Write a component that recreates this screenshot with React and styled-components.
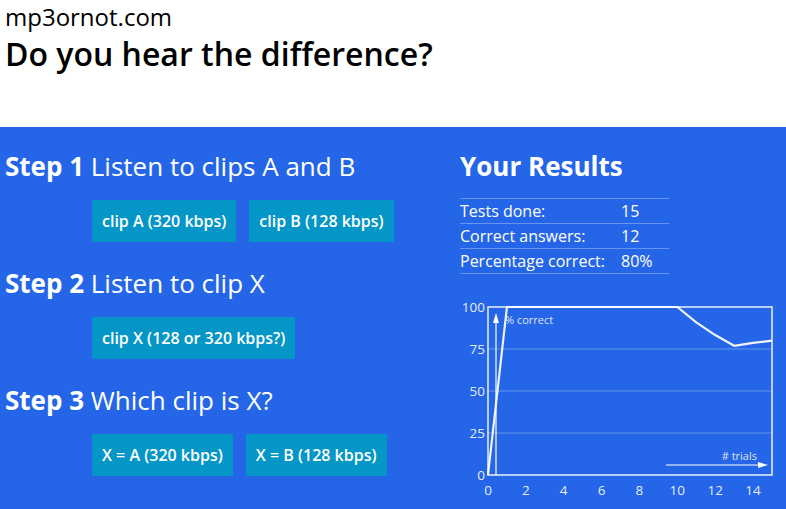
import React from "react";
import styled, { createGlobalStyle } from "styled-components";

const GlobalStyle = createGlobalStyle`
  html, body {
    margin: 0;
    padding: 0;
    background: #ffffff;
    font-family: "Open Sans", "Liberation Sans", sans-serif;
  }
`;

const Page = styled.div`
  width: 786px;
  height: 509px;
  overflow: hidden;
`;

const Header = styled.header`
  height: 127px;
  padding: 0 5px;
  box-sizing: border-box;
  color: #000;
  display: flex;
  flex-direction: column;
`;

const SiteName = styled.div`
  font-size: 24px;
  line-height: 33px;
`;

const Title = styled.h1`
  margin: 0;
  font-size: 32px;
  font-weight: 600;
  line-height: 44px;
  margin-top: -1px;
`;

const Main = styled.main`
  background: #2566e8;
  height: 382px;
  display: grid;
  grid-template-columns: 455px 1fr;
  padding: 22px 0 0 5px;
  box-sizing: border-box;
  color: #fff;
`;

const Steps = styled.div`
  display: flex;
  flex-direction: column;
`;

const StepHeading = styled.h2`
  margin: 0;
  font-size: 26px;
  font-weight: 400;
  line-height: 34px;
  b {
    font-weight: 700;
  }
`;

const ButtonRow = styled.div`
  display: flex;
  gap: 13px;
  margin: 17px 0 24px 87px;
`;

const ClipButton = styled.button`
  height: 42px;
  padding: 0 10px;
  border: none;
  background: #0596c8;
  color: #fff;
  font-family: inherit;
  font-size: 16px;
  font-weight: 600;
  cursor: pointer;
`;

const Results = styled.div`
  display: flex;
  flex-direction: column;
`;

const ResultsTitle = styled.h2`
  margin: 0 0 15px;
  font-size: 26px;
  font-weight: 700;
  line-height: 34px;
`;

const Table = styled.div`
  width: 209px;
  display: grid;
  grid-template-columns: 161px 1fr;
  border-bottom: 1px solid rgba(255, 255, 255, 0.3);
`;

const Cell = styled.div`
  font-size: 16px;
  line-height: 24px;
  border-top: 1px solid rgba(255, 255, 255, 0.3);
`;

const Chart = styled.svg`
  display: block;
  margin-top: 23px;
  width: 326px;
  height: 206px;
  font-family: "Open Sans", "Liberation Sans", sans-serif;
`;

const stats = [
  ["Tests done:", "15"],
  ["Correct answers:", "12"],
  ["Percentage correct:", "80%"],
];

const history = [0, 100, 100, 100, 100, 100, 100, 100, 100, 100, 100, 90.9, 83.3, 76.9, 78.6, 80];

const L = 28, R = 312, T = 10, B = 178;
const px = (i) => L + (i / 15) * (R - L);
const py = (v) => B - (v / 100) * (B - T);

const ResultChart = () => (
  <Chart viewBox="0 0 326 206">
    {[25, 50, 75].map((v) => (
      <line key={v} x1={L} x2={R} y1={py(v)} y2={py(v)} stroke="rgba(255,255,255,0.3)" strokeWidth="1" />
    ))}
    <rect x={L} y={T} width={R - L} height={B - T} fill="none" stroke="rgba(255,255,255,0.9)" strokeWidth="1.5" />
    {[0, 25, 50, 75, 100].map((v) => (
      <text key={v} x={25} y={py(v) + 5} textAnchor="end" fontSize="13.5" fill="rgba(255,255,255,0.9)">{v}</text>
    ))}
    {[0, 2, 4, 6, 8, 10, 12, 14].map((i) => (
      <text key={i} x={px(i)} y={198} textAnchor="middle" fontSize="13.5" fill="rgba(255,255,255,0.9)">{i}</text>
    ))}
    <line x1={36} y1={B} x2={36} y2={24} stroke="#fff" strokeWidth="1.2" />
    <polygon points="36,16 33,26 39,26" fill="#fff" />
    <text x={45} y={27} fontSize="11" fill="rgba(255,255,255,0.85)">% correct</text>
    <line x1={206} y1={168} x2={300} y2={168} stroke="#fff" strokeWidth="1.2" />
    <polygon points="308,168 298,165 298,171" fill="#fff" />
    <text x={297} y={163} textAnchor="end" fontSize="11" fill="rgba(255,255,255,0.85)"># trials</text>
    <polyline
      points={history.map((v, i) => `${px(i)},${py(v)}`).join(" ")}
      fill="none"
      stroke="#fff"
      strokeWidth="2.2"
      strokeLinejoin="round"
      opacity="0.92"
    />
  </Chart>
);

export default function App() {
  return (
    <Page>
      <GlobalStyle />
      <Header>
        <SiteName>mp3ornot.com</SiteName>
        <Title>Do you hear the difference?</Title>
      </Header>
      <Main>
        <Steps>
          <StepHeading><b>Step 1</b> Listen to clips A and B</StepHeading>
          <ButtonRow>
            <ClipButton>clip A (320 kbps)</ClipButton>
            <ClipButton>clip B (128 kbps)</ClipButton>
          </ButtonRow>
          <StepHeading><b>Step 2</b> Listen to clip X</StepHeading>
          <ButtonRow>
            <ClipButton>clip X (128 or 320 kbps?)</ClipButton>
          </ButtonRow>
          <StepHeading><b>Step 3</b> Which clip is X?</StepHeading>
          <ButtonRow>
            <ClipButton>X = A (320 kbps)</ClipButton>
            <ClipButton>X = B (128 kbps)</ClipButton>
          </ButtonRow>
        </Steps>
        <Results>
          <ResultsTitle>Your Results</ResultsTitle>
          <Table>
            {stats.map(([label, value]) => (
              <React.Fragment key={label}>
                <Cell>{label}</Cell>
                <Cell>{value}</Cell>
              </React.Fragment>
            ))}
          </Table>
          <ResultChart />
        </Results>
      </Main>
    </Page>
  );
}
